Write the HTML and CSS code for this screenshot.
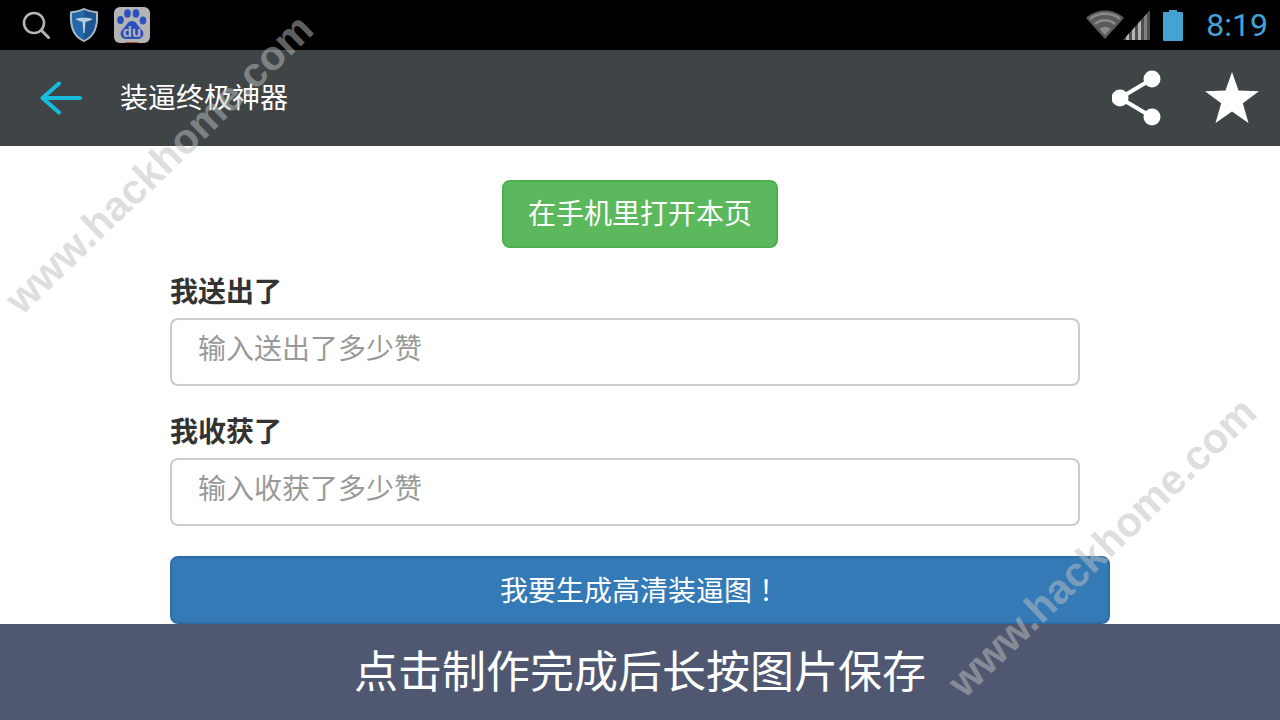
FILE: index.html
```html
<!DOCTYPE html>
<html lang="zh-CN">
<head>
    <meta charset="UTF-8">
    <meta name="viewport" content="width=device-width, initial-scale=1.0">
    <title>装逼终极神器</title>
    <link rel="stylesheet" href="styles.css">
</head>
<body>
    <!-- Status bar -->
    <div class="status-bar">
        <div class="status-left">
            <svg class="icon-search" width="30" height="30" viewBox="0 0 30 30">
                <circle cx="13" cy="13" r="10" fill="none" stroke="#b4b4b4" stroke-width="2.6"/>
                <path d="M20.500 20.500 L27.500 27.500" stroke="#b4b4b4" stroke-width="3" stroke-linecap="round"/>
            </svg>
            <svg class="icon-shield" width="30" height="36" viewBox="0 0 30 36">
                <path d="M15 1 C10 3.500 5 4 1 4.500 C0.500 16 1 29 15 35 C29 29 29.500 16 29 4.500 C25 4 20 3.500 15 1 Z" fill="#a9b9c8"/>
                <path d="M15 3 C10.500 5 6.500 5.800 3 6.200 C2.800 16 3.500 27.500 15 33 C26.500 27.500 27.200 16 27 6.200 C23.500 5.800 19.500 5 15 3 Z" fill="#2467a8"/>
                <path d="M15 3 C19.500 5 23.500 5.800 27 6.200 C27.200 16 26.500 27.500 15 33 Z" fill="#1c5590"/>
                <path d="M6 12 C11 10.300 19 10.300 24 12 C21 13.800 18.500 14.300 16.500 14.800 L15.600 26 L14.400 26 L13.500 14.800 C11.500 14.300 9 13.800 6 12 Z" fill="#b9d0e0"/>
            </svg>
            <svg class="icon-baidu" width="36" height="36" viewBox="0 0 36 36">
                <rect width="36" height="36" rx="6" fill="#b4b4b6"/>
                <path d="M11 35 h13 v1 h-13 Z" fill="#c0492f"/>
                <ellipse cx="6.500" cy="13" rx="3.300" ry="4" fill="#2a50bd"/>
                <ellipse cx="13.500" cy="6.500" rx="3.300" ry="4.200" fill="#2a50bd"/>
                <ellipse cx="22" cy="6.500" rx="3.300" ry="4.200" fill="#2a50bd"/>
                <ellipse cx="29" cy="13.500" rx="3.300" ry="4" fill="#2a50bd"/>
                <path d="M18 14 C23 14 24 20 28 23 C31 26 29 32 24 32 L12 32 C7 32 5 26 8 23 C12 20 13 14 18 14 Z" fill="#2a50bd"/>
                <text class="baidu-text" x="18" y="29.500" text-anchor="middle">du</text>
            </svg>
        </div>
        <div class="status-right">
            <svg class="icon-wifi" width="38" height="30" viewBox="0 0 38 30">
                <path d="M0 8 C10 -2 28 -2 38 8 L19 29 Z" fill="#5a5a5a"/>
                <path d="M4 9 C12 2 26 2 34 9" fill="none" stroke="#8a8a8a" stroke-width="2.400"/>
                <path d="M9 14 C15 9 23 9 29 14" fill="none" stroke="#8a8a8a" stroke-width="2.400"/>
                <path d="M13.500 19 C17 16 21 16 24.500 19 L19 25 Z" fill="#8a8a8a"/>
            </svg>
            <svg class="icon-signal" width="27" height="32" viewBox="0 0 27 32">
                <path d="M0 31 L27 1 L27 31 Z" fill="#4e4e4e"/>
                <path d="M3 31 L3 28 L6 24.600 L6 31 Z" fill="#b4b4b4"/>
                <path d="M9 31 L9 21.200 L12 17.900 L12 31 Z" fill="#b4b4b4"/>
                <path d="M15 31 L15 14.600 L18 11.300 L18 31 Z" fill="#b4b4b4"/>
                <path d="M21 31 L21 7.900 L24 4.600 L24 31 Z" fill="#808080"/>
            </svg>
            <svg class="icon-battery" width="20" height="31" viewBox="0 0 20 31">
                <path d="M6 0 H14 V2 H19 A1 1 0 0 1 20 3 V30 A1 1 0 0 1 19 31 H1 A1 1 0 0 1 0 30 V3 A1 1 0 0 1 1 2 H6 Z" fill="#45a3d4"/>
            </svg>
            <span class="clock">8:19</span>
        </div>
    </div>

    <!-- Action bar -->
    <div class="action-bar">
        <svg class="icon-back" width="42" height="36" viewBox="0 0 42 36">
            <path d="M40 18 H3 M19 3.500 L2.500 18 L19 32.500" fill="none" stroke="#17bcdc" stroke-width="4" stroke-linecap="round" stroke-linejoin="round"/>
        </svg>
        <div class="action-title">装逼终极神器</div>
        <svg class="icon-share" width="52" height="56" viewBox="0 0 52 56">
            <path d="M40 9 L8 28 L40 47" fill="none" stroke="#fff" stroke-width="4"/>
            <circle cx="40" cy="9" r="8.500" fill="#fff"/>
            <circle cx="8" cy="28" r="8.500" fill="#fff"/>
            <circle cx="40" cy="47" r="8.500" fill="#fff"/>
        </svg>
        <svg class="icon-star" width="54" height="52" viewBox="0 0 54 52">
            <path d="M27 0 L33.500 18.500 L54 19.200 L37.800 31.300 L43.500 51 L27 39.500 L10.500 51 L16.200 31.300 L0 19.200 L20.500 18.500 Z" fill="#fff"/>
        </svg>
    </div>

    <!-- Form -->
    <div class="content">
        <div class="open-row">
            <button class="btn-open">在手机里打开本页</button>
        </div>
        <label class="field-label">我送出了</label>
        <input class="field-input" type="text" placeholder="输入送出了多少赞">
        <label class="field-label field-label-next">我收获了</label>
        <input class="field-input" type="text" placeholder="输入收获了多少赞">
        <button class="btn-submit">我要生成高清装逼图<span class="bang">！</span></button>
    </div>

    <!-- Bottom tip -->
    <div class="tip-bar">点击制作完成后长按图片保存</div>

    <!-- Watermarks -->
    <div class="watermark mark-top">www.hackhome.com</div>
    <div class="watermark mark-bottom">www.hackhome.com</div>
</body>
</html>
```

FILE: styles.css
```css
/* General Styling */
html, body {
    height: 720px;
}
body {
    margin: 0;
    position: relative;
    overflow: hidden;
    display: flex;
    flex-direction: column;
    background: #fff;
    font-family: "Liberation Sans", "Noto Sans CJK SC", sans-serif;
}

/* Status Bar */
.status-bar {
    height: 50px;
    flex: none;
    display: flex;
    justify-content: space-between;
    align-items: center;
    background: #000;
}
.status-left {
    display: flex;
    align-items: center;
    padding-left: 21px;
}
.icon-shield {
    margin-left: 18px;
}
.icon-baidu {
    margin-left: 15px;
}
.baidu-text {
    font-family: "Liberation Sans", sans-serif;
    font-size: 15px;
    font-weight: bold;
    fill: #b4b4b6;
}
.status-right {
    display: flex;
    align-items: center;
    padding-right: 12px;
}
.icon-signal {
    margin-left: -1px;
}
.icon-battery {
    margin-left: 13px;
}
.clock {
    margin-left: 23px;
    font-family: Roboto, sans-serif;
    font-size: 32px;
    color: #45a3d4;
}

/* Action Bar */
.action-bar {
    height: 96px;
    flex: none;
    display: flex;
    align-items: center;
    padding-left: 40px;
    background: #3f4547;
    box-sizing: border-box;
}
.action-title {
    flex: 1;
    margin-left: 38px;
    padding-bottom: 4px;
    font-size: 28px;
    color: #fff;
}
.icon-share {
    margin-right: 41px;
}
.icon-star {
    margin-right: 21px;
}

/* Form */
.content {
    height: 478px;
    flex: none;
    box-sizing: border-box;
    padding: 34px 170px 0;
    display: flex;
    flex-direction: column;
    align-items: flex-start;
}
.open-row {
    width: 940px;
    display: flex;
    justify-content: center;
}
.btn-open {
    width: 276px;
    height: 68px;
    padding: 0 0 4px;
    border: 2px solid #4cae4c;
    border-radius: 8px;
    background: #5cb85c;
    color: #fff;
    font-family: inherit;
    font-size: 28px;
}
.field-label {
    margin-top: 26px;
    height: 44px;
    line-height: 38px;
    font-size: 28px;
    font-weight: bold;
    color: #333;
}
.field-label-next {
    margin-top: 28px;
}
.field-input {
    width: 910px;
    height: 68px;
    box-sizing: border-box;
    padding: 0 26px 4px;
    border: 2px solid #ccc;
    border-radius: 8px;
    background: #fff;
    font-family: inherit;
    font-size: 28px;
    outline: none;
}
.field-input::placeholder {
    color: #999;
}
.btn-submit {
    width: 940px;
    height: 68px;
    margin-top: 30px;
    padding: 0 0 2px;
    border: 2px solid #2e6da4;
    border-radius: 8px;
    background: #337ab7;
    color: #fff;
    font-family: inherit;
    font-size: 28px;
}
/* the font sets this mark left in its cell, the reference has it centred */
.bang {
    margin-left: 7px;
    margin-right: -7px;
}

/* Bottom Tip */
.tip-bar {
    flex: 1;
    display: flex;
    align-items: center;
    justify-content: center;
    padding-bottom: 6px;
    background: #4f5870;
    color: #fff;
    font-size: 44px;
}

/* Watermarks */
.watermark {
    position: absolute;
    white-space: nowrap;
    font-family: "Liberation Sans", sans-serif;
    font-size: 41.5px;
    font-weight: bold;
    line-height: 36px;
    color: rgba(190, 190, 190, 0.5);
    pointer-events: none;
}
.mark-top {
    left: 12px;
    top: 288px;
    transform-origin: left center;
    transform: rotate(-44deg);
}
.mark-bottom {
    right: 31px;
    top: 387px;
    transform-origin: right center;
    transform: rotate(-44deg);
}
```
